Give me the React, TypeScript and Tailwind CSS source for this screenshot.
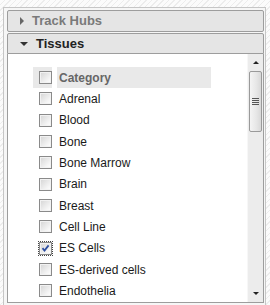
const tissues = [
  'Adrenal',
  'Blood',
  'Bone',
  'Bone Marrow',
  'Brain',
  'Breast',
  'Cell Line',
  'ES Cells',
  'ES-derived cells',
  'Endothelia',
];

function Box({ checked = false, focused = false }: { checked?: boolean; focused?: boolean }) {
  return (
    <span
      className={
        'relative block w-[13px] h-[13px] border border-[#8a8a8a] bg-[linear-gradient(135deg,#d4d4d4,#f4f4f4_70%,#ffffff)] shadow-[inset_0_0_0_1px_#f2f2f2] ' +
        (focused ? 'outline outline-1 outline-dotted outline-[#444] outline-offset-[0px]' : '')
      }
    >
      {checked && (
        <svg viewBox="0 0 11 11" className="absolute left-0 top-0 w-[11px] h-[11px]">
          <path d="M2.5 5.2 L4.5 7.5 L8.6 2.4" fill="none" stroke="#2d4ea0" strokeWidth="1.8" />
        </svg>
      )}
    </span>
  );
}

export default function App() {
  return (
    <div className="h-[305px] w-[270px] overflow-hidden bg-[repeating-linear-gradient(135deg,#fbfbfb_0px,#fbfbfb_3px,#ececec_3px,#ececec_4px)] pt-[7px] pl-[3px] font-['Liberation_Sans',Arial,sans-serif]">
      <div className="w-[263px] h-[310px] border border-[#c6c6c6] bg-[#f6f6f6] pt-[2px] pl-[3px] pr-[1px]">
        {/* Track Hubs header */}
        <div className="flex items-center h-[22px] border border-[#9d9d9d] rounded-[2px] bg-[#e5e5e5] pl-[12px]">
          <span className="w-0 h-0 border-y-[4px] border-y-transparent border-l-[4px] border-l-[#666]" />
          <span className="ml-[8px] text-[13px] font-bold text-[#7a7a7a]">Track Hubs</span>
        </div>
        {/* Tissues header */}
        <div className="mt-[1px] flex items-center h-[21px] border border-[#9d9d9d] rounded-t-[2px] bg-[#e5e5e5] pl-[12px]">
          <span className="w-0 h-0 border-x-[4px] border-x-transparent border-t-[4px] border-t-[#333]" />
          <span className="ml-[8px] text-[13px] font-bold text-[#222]">Tissues</span>
        </div>
        {/* content */}
        <div className="flex h-[249px] border-x border-b border-[#9d9d9d] border-t-0 bg-white">
          <div className="flex-1 pt-[13px] pl-[25px]">
            <div className="flex items-center h-[21.33px]">
              <div className="h-full w-[19px] bg-[#e9e9e9] flex items-center justify-end">
                <Box />
              </div>
              <div className="ml-[5px] h-full w-[154px] bg-[#e9e9e9] flex items-center pl-[2px] text-[12px] font-bold text-[#666]">
                Category
              </div>
            </div>
            {tissues.map((t) => (
              <div key={t} className="flex items-center h-[21.33px]">
                <div className="w-[19px] flex justify-end">
                  <Box checked={t === 'ES Cells'} focused={t === 'ES Cells'} />
                </div>
                <span className="ml-[7px] text-[12px] text-[#1a1a1a]">{t}</span>
              </div>
            ))}
          </div>
          {/* scrollbar */}
          <div className="w-[16px] flex flex-col bg-[#ececec] border-l border-[#f7f7f7]">
            <div className="h-[17px] flex items-center justify-center">
              <span className="w-0 h-0 border-x-[3.5px] border-x-transparent border-b-[3px] border-b-[#222]" />
            </div>
            <div className="mx-[1px] h-[61px] border border-[#9a9a9a] rounded-[2px] bg-[linear-gradient(90deg,#f4f4f4,#e6e6e6_60%,#d8d8d8)] flex flex-col items-center justify-center gap-[1px]">
              <span className="block w-[7px] h-[1px] bg-[#555]" />
              <span className="block w-[7px] h-[1px] bg-[#555]" />
              <span className="block w-[7px] h-[1px] bg-[#555]" />
              <span className="block w-[7px] h-[1px] bg-[#555]" />
            </div>
            <div className="flex-1" />
            <div className="h-[17px] flex items-center justify-center">
              <span className="w-0 h-0 border-x-[3.5px] border-x-transparent border-t-[3px] border-t-[#222]" />
            </div>
          </div>
        </div>
      </div>
    </div>
  );
}
